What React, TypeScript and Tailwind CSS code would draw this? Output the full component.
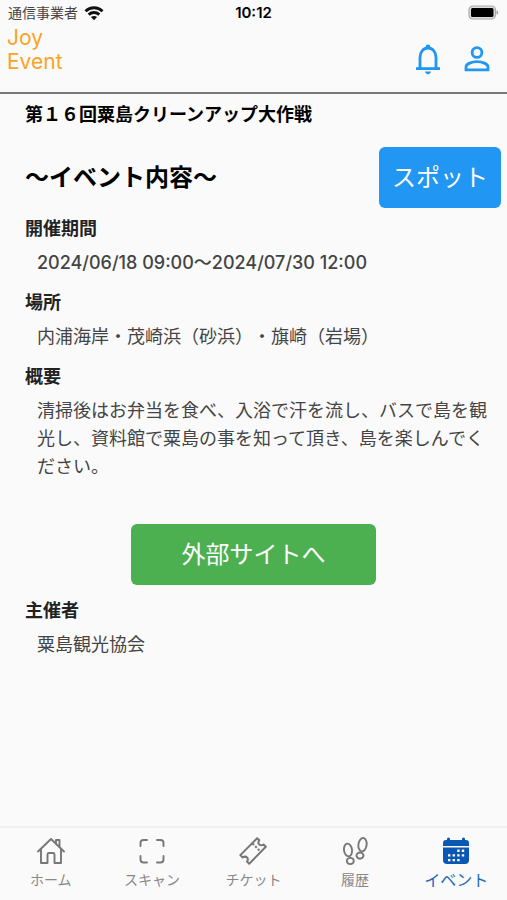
import React from "react";
import clsx from "clsx";

interface SectionProps {
  label: string;
  children: React.ReactNode;
}

interface TabItem {
  label: string;
  icon: React.ReactNode;
  active?: boolean;
}

const WifiIcon = () => (
  <svg width="20" height="16" viewBox="0 0 20 16" fill="none" stroke="#111" strokeWidth="2.9">
    <path d="M1.5 6.2C6.2 1.6 13.8 1.6 18.5 6.2" />
    <path d="M4.7 9.6c3-2.8 7.6-2.8 10.6 0" />
    <path d="M10 15.2 6.9 12.1c1.8-1.6 4.4-1.6 6.2 0Z" fill="#111" stroke="none" />
  </svg>
);

const BatteryIcon = () => (
  <svg width="31" height="16" viewBox="0 0 31 16">
    <rect x="1" y="1" width="26.5" height="13" rx="4" fill="#ddd" stroke="#aaa" strokeWidth="1.2" />
    <rect x="3" y="3" width="22.5" height="9" rx="1.5" fill="#000" />
    <path d="M28.6 5.2c2 .8 2 3.8 0 4.6Z" fill="#999" />
  </svg>
);

const BellIcon = () => (
  <svg width="30" height="32" viewBox="0 0 30 32" fill="none" stroke="#2196f3" strokeWidth="2.8">
    <path d="M7 25.5V14.5C7 9 10.5 5 15 5s8 4 8 9.5v11" />
    <path d="M3 25.6h24" />
    <path d="M3 26.5 7.5 22v4.5ZM27 26.5 22.5 22v4.5Z" fill="#2196f3" stroke="none" />
    <path d="M12.6 5V3.800a2.4 2.4 0 0 1 4.8 0V5Z" fill="#2196f3" stroke="none" />
    <path d="M12 28.5h6c-.4 1.8-1.6 2.7-3 2.7s-2.6-.9-3-2.7Z" fill="#2196f3" stroke="none" />
  </svg>
);

const PersonIcon = () => (
  <svg width="28" height="28" viewBox="0 0 28 28" fill="none" stroke="#2196f3" strokeWidth="2.8">
    <circle cx="14" cy="7.5" r="4.9" />
    <path d="M3 24.8v-2.6c0-3.4 6-5.6 11-5.6s11 2.2 11 5.6v2.6Z" />
  </svg>
);

const HomeIcon = () => (
  <svg width="30" height="30" viewBox="0 0 30 30" fill="none" stroke="#777" strokeWidth="1.9" strokeLinecap="round" strokeLinejoin="round">
    <path d="M2 15.5 15 3l13 12.500" />
    <path d="M5 13.5V27h6.500v-8.500q0-1.500 1.500-1.500h4q1.500 0 1.500 1.500V27H25V13.500" />
    <path d="M20 7.5V4h3.500v7" />
  </svg>
);

const ScanIcon = () => (
  <svg width="30" height="30" viewBox="0 0 30 30" fill="none" stroke="#777" strokeWidth="1.9" strokeLinecap="round">
    <path d="M3.5 10V7q0-3 3-3H10" />
    <path d="M20 4h3.500q3 0 3 3v3" />
    <path d="M26.5 20v3.500q0 3-3 3H20" />
    <path d="M10 26.5H6.500q-3 0-3-3V20" />
  </svg>
);

const TicketIcon = () => (
  <svg width="30" height="30" viewBox="0 0 30 30" fill="none" stroke="#777" strokeWidth="2" strokeLinejoin="round">
    <path d="M19.2 2.2 21.3 4.300c-1.300 1.900-1 3.300 0 4.200s2.500 1.200 4.200 0l2.300 2.300L11.200 27.800l-2.200-2.200c1.300-1.700.9-3.200 0-4.100s-2.500-1.300-4.300 0L2.300 19.100Z" />
    <path d="m14.5 7.500 8.200 8.200" strokeDasharray="2.2 1.6" />
  </svg>
);

const StepsIcon = () => (
  <svg width="30" height="30" viewBox="0 0 30 30" fill="none" stroke="#777" strokeWidth="1.9">
    <ellipse cx="8" cy="14" rx="4" ry="6.4" transform="rotate(-8 8 14)" />
    <ellipse cx="10.300" cy="25" rx="3.500" ry="3.100" />
    <ellipse cx="22.500" cy="8.700" rx="4.100" ry="6.700" transform="rotate(8 22.500 8.700)" />
    <ellipse cx="20" cy="19.600" rx="3.500" ry="3.100" />
  </svg>
);

const CalendarIcon = () => (
  <svg width="30" height="30" viewBox="0 0 30 30" fill="#0b57b4">
    <path d="M2 10V7q0-3 3-3h1V3a1 1 0 0 1 3 0v1h12V3a1 1 0 0 1 3 0v1h1q3 0 3 3v3Z" />
    <path d="M2 11.5h26V24q0 4-4 4H6q-4 0-4-4Z" />
    <g fill="#fff">
      <path d="M16.2 13.5h2.4v2.4h-2.4zM20.8 13.5h2.4v2.4h-2.4z" />
      <path d="M7 18.2h2.4v2.4H7zM11.6 18.2H14v2.4h-2.4zM16.2 18.2h2.4v2.4h-2.4zM20.8 18.2h2.4v2.4h-2.4z" />
      <path d="M7 22.9h2.4v2.4H7zM11.6 22.9H14v2.4h-2.4zM16.2 22.9h2.4v2.4h-2.4z" />
    </g>
  </svg>
);

const tabs: TabItem[] = [
  { label: "ホーム", icon: <HomeIcon /> },
  { label: "スキャン", icon: <ScanIcon /> },
  { label: "チケット", icon: <TicketIcon /> },
  { label: "履歴", icon: <StepsIcon /> },
  { label: "イベント", icon: <CalendarIcon />, active: true },
];

/**
 * Label with an indented value below it
 */
const Section: React.FC<SectionProps> = ({ label, children }) => (
  <section>
    <h3 className="font-semibold text-[#222]">{label}</h3>
    <p className="mt-1.5 pl-3 text-[#444]">{children}</p>
  </section>
);

const StatusBar = () => (
  <div className="grid h-[26px] grid-cols-3 items-center px-2 text-sm">
    <div className="flex items-center gap-1.5 text-[#444]">
      <span>通信事業者</span>
      <WifiIcon />
    </div>
    <span className="text-center text-[15px] font-semibold">10:12</span>
    <div className="flex justify-end">
      <BatteryIcon />
    </div>
  </div>
);

const TabBar = () => (
  <nav className="grid h-[74px] grid-cols-5 border-t-2 border-[#f0f0f0]">
    {tabs.map((tab) => (
      <a
        key={tab.label}
        href="#"
        aria-current={tab.active ? "page" : undefined}
        className={clsx(
          "flex flex-col items-center gap-1 pt-2 leading-5",
          tab.active ? "text-base text-[#2468b8]" : "text-sm text-[#888]"
        )}
      >
        {tab.icon}
        <span>{tab.label}</span>
      </a>
    ))}
  </nav>
);

export default function App() {
  return (
    <div className="flex min-h-screen flex-col bg-[#fafafa] font-['Inter','Noto_Sans_CJK_JP',sans-serif] text-[18px] leading-7 text-black [text-spacing-trim:space-all]">
      <StatusBar />
      <header className="flex h-[68px] items-start justify-between border-b-2 border-[#777] pr-4 pl-[7px]">
        <div className="text-[21px] leading-6 text-[#fba31f]">
          Joy
          <br />
          Event
        </div>
        <div className="flex items-center gap-5 pt-[17px]">
          <button type="button" aria-label="お知らせ">
            <BellIcon />
          </button>
          <button type="button" aria-label="アカウント">
            <PersonIcon />
          </button>
        </div>
      </header>

      <main className="flex-1 pt-[7px] pl-[25px]">
        <h1 className="font-semibold">第１６回粟島クリーンアップ大作戦</h1>
        <div className="mt-[18px] mr-1.5 flex items-center justify-between">
          <h2 className="text-2xl font-semibold">～イベント内容～</h2>
          <button type="button" className="h-[61px] rounded-md bg-[#2196f3] px-[13px] text-2xl text-white">
            スポット
          </button>
        </div>

        <div className="mt-[7px] mr-2 flex flex-col gap-3">
          <Section label="開催期間">
            <span className="font-medium">2024/06/18 09:00～2024/07/30 12:00</span>
          </Section>
          <Section label="場所">内浦海岸・茂崎浜（砂浜）・旗崎（岩場）</Section>
          <Section label="概要">
            清掃後はお弁当を食べ、入浴で汗を流し、バスで島を観光し、資料館で粟島の事を知って頂き、島を楽しんでください。
          </Section>
        </div>

        <div className="mt-[43px] mr-[25px] mb-3 flex justify-center">
          <button type="button" className="h-[61px] w-[245px] rounded-md bg-[#4caf50] text-2xl text-white">
            外部サイトへ
          </button>
        </div>
        <Section label="主催者">粟島観光協会</Section>
      </main>

      <TabBar />
    </div>
  );
}
